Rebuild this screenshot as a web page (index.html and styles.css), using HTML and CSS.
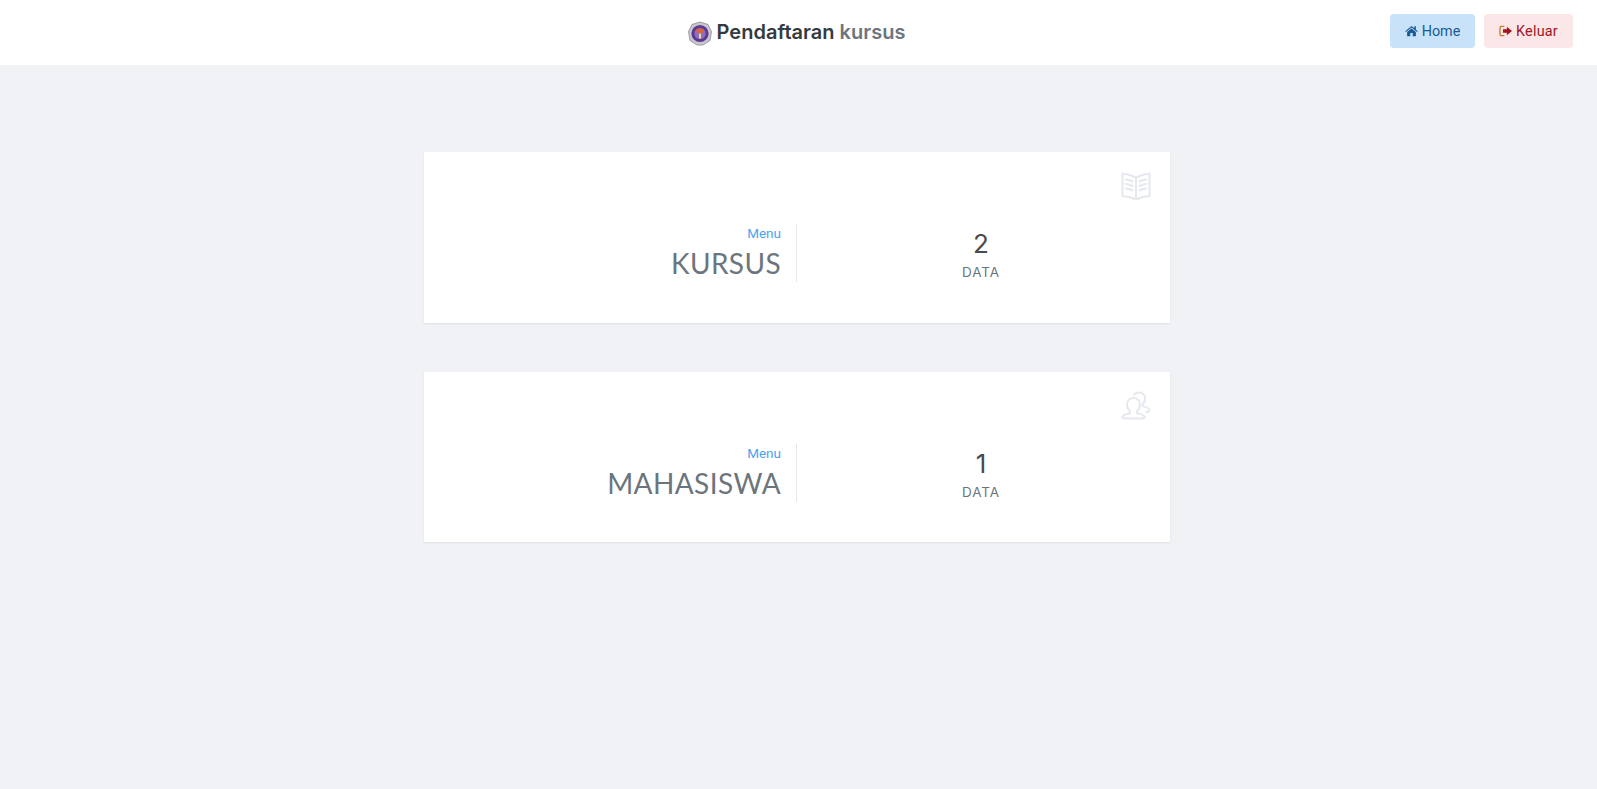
FILE: index.html
```html
<!DOCTYPE html>
<html lang="id">
<head>
<meta charset="utf-8">
<title>Pendaftaran kursus</title>
<link rel="stylesheet" href="styles.css">
</head>
<body>
<header class="topbar">
  <div class="brand">
    <svg class="logo" viewBox="0 0 24 24" aria-hidden="true">
      <polygon points="12,0.5 20,3 23.5,10 22,19 15,23.5 9,23.5 2,19 0.5,10 4,3" fill="#c9c6cc" stroke="#8d8a94" stroke-width=".8"/>
      <circle cx="12" cy="12" r="8.6" fill="#5b3a93"/>
      <circle cx="12" cy="12" r="5.6" fill="#8f6fc0"/>
      <path d="M8 8.500c1-2 7-2 8 0 0 2-2 3.500-4 3.500s-4-1.500-4-3.500z" fill="#d9663a"/>
      <path d="M11 12h2v5h-2z" fill="#e8d9a0"/>
    </svg>
    <span class="brand-main">Pendaftaran</span>&nbsp;<span class="brand-sub">kursus</span>
  </div>
  <nav class="actions">
    <a class="btn btn-home" href="#">
      <svg class="btn-icon" viewBox="0 0 16 14" aria-hidden="true"><path d="M8 0.800 0.300 7.200l.9 1L8 2.600l6.800 5.600.9-1L13.400 5.300V1.300h-2v2.300L8 .8zM8 3.800 2.600 8.300V13.500h3.900V9.500h3V13.500h3.900V8.300L8 3.800z" fill="currentColor"/></svg>
      Home
    </a>
    <a class="btn btn-out" href="#">
      <svg class="btn-icon" viewBox="0 0 16 14" aria-hidden="true"><path d="M6 1.500H2.800C1.800 1.500 1 2.300 1 3.300v7.400c0 1 .8 1.800 1.800 1.800H6" fill="none" stroke="#c9752f" stroke-width="1.500"/><path d="M4.500 5H9V2l6 5-6 5V9H4.500z" fill="currentColor"/></svg>
      Keluar
    </a>
  </nav>
</header>
<main class="content">
  <section class="card">
    <svg class="card-icon" viewBox="0 0 30 30" aria-hidden="true">
      <g fill="none" stroke="currentColor" stroke-width="2" stroke-linejoin="round" stroke-linecap="round">
        <path d="M15 6.500 C11 4.500 6 3 1.500 2.500V25c5 .5 9.500 1.500 13.500 3.500 4-2 8.500-3 13.500-3.500V2.500C24 3 19 4.500 15 6.500zM15 6.500V28.500"/>
        <path d="M5 8.500c2.500.3 4.500.9 6.500 2M5 13c2.500.3 4.500.9 6.500 2M5 17.500c2.500.3 4.500.9 6.500 2M25 8.500c-2.500.3-4.500.9-6.500 2M25 13c-2.500.3-4.500.9-6.500 2M25 17.500c-2.500.3-4.500.9-6.500 2"/>
      </g>
    </svg>
    <div class="card-body">
      <div class="card-left">
        <a class="menu-link" href="#">Menu</a>
        <div class="card-title">KURSUS</div>
      </div>
      <div class="card-right">
        <div class="count">2</div>
        <div class="count-label">DATA</div>
      </div>
    </div>
  </section>
  <section class="card">
    <svg class="card-icon" viewBox="0 0 30 30" aria-hidden="true">
      <g fill="none" stroke="currentColor" stroke-width="2" stroke-linejoin="round" stroke-linecap="round">
        <path d="M12.500 7c3.500 0 6.500 2.500 6.500 6.500 0 3-1.500 5.500-3 6.500v2c2 1 6.500 1.500 7.500 3.500.5 1.200-.2 2-1.500 2H3c-1.300 0-2-.8-1.500-2 1-2 5.500-2.500 7.500-3.500v-2c-1.500-1-3-3.500-3-6.500C6 9.500 9 7 12.500 7z"/>
        <path d="M13 4c1-1.500 3-2.500 5-2.500 3.500 0 6 2.500 6 6 0 2.500-1 4.500-2.500 5.500v2c2 .8 5.500 1.500 6.500 3 .8 1.300 0 3-1.500 3H25"/>
      </g>
    </svg>
    <div class="card-body">
      <div class="card-left">
        <a class="menu-link" href="#">Menu</a>
        <div class="card-title">MAHASISWA</div>
      </div>
      <div class="card-right">
        <div class="count">1</div>
        <div class="count-label">DATA</div>
      </div>
    </div>
  </section>
</main>
</body>
</html>
```
FILE: styles.css
```css
* { box-sizing: border-box; }
html, body { margin: 0; height: 100%; }
body {
  background: #f0f2f6;
  font-family: "Inter", "Open Sans", sans-serif;
  color: #495057;
}
.topbar {
  height: 65px;
  background: #fff;
  display: grid;
  grid-template-columns: 1fr auto 1fr;
  align-items: start;
  padding: 14px 24px 0;
}
.brand {
  grid-column: 2;
  display: flex;
  align-items: center;
  height: 34px;
  margin: 1px 4px 0 0;
  font-size: 20px;
  font-weight: 600;
  color: #343a40;
}
.logo { width: 24px; height: 25px; margin: 2px 5px 0 0; }
.brand-sub { color: #6c757d; }
.actions { grid-column: 3; justify-self: end; display: flex; gap: 9px; }
.btn {
  display: flex;
  align-items: center;
  justify-content: center;
  height: 34px;
  border-radius: 4px;
  font: 400 14.400px "Roboto", sans-serif;
  text-decoration: none;
}
.btn-icon { width: 13px; height: 12px; margin-right: 4px; }
.btn-out .btn-icon { width: 14px; margin-right: 3px; }
.btn-home { width: 85px; background: #c7e2f9; color: #1b5a94; }
.btn-out { width: 89px; background: #fbe7e8; color: #a01520; letter-spacing: .2px; }
.content {
  width: 746px;
  margin-left: 424px;
  padding-top: 87.200px;
  display: flex;
  flex-direction: column;
  gap: 49px;
}
.card {
  position: relative;
  height: 170.500px;
  background: #fff;
  box-shadow: 0 1px 2px rgba(0, 0, 0, .08);
  padding-top: 72px;
}
.card-icon {
  position: absolute;
  top: 19px;
  right: 19px;
  width: 30px;
  height: 30px;
  color: #e5e8ee;
}
.card-body { display: grid; grid-template-columns: 373px 1fr; height: 58px; }
.card-left {
  border-right: 1px solid #e3e6ec;
  padding: 1px 15px 0 0;
  text-align: right;
}
.menu-link {
  display: block;
  font: 400 13.500px/17px "Roboto", sans-serif;
  color: #4aa3f0;
  text-decoration: none;
}
.card-title {
  font-family: "Lato", "Open Sans", sans-serif;
  font-size: 28px;
  line-height: 36px;
  margin-top: 3px;
  letter-spacing: .4px;
  color: #6c757d;
}
.card-right { text-align: center; padding-right: 5px; padding-top: 3px; }
.count { font-size: 26px; line-height: 34px; color: #4a4a4a; }
.count-label { font-size: 13.500px; line-height: 18px; margin-top: 2px; letter-spacing: .9px; color: #6c757d; }
```
